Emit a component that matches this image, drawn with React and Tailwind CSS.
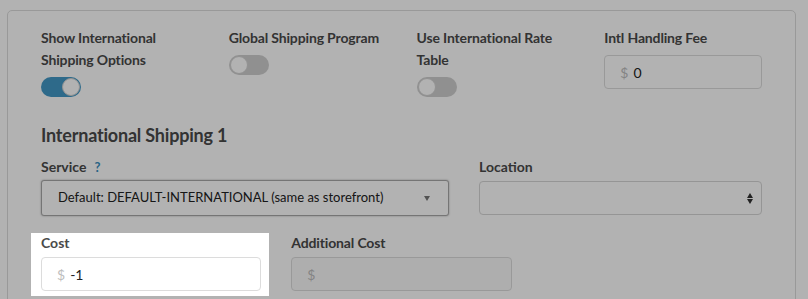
import { useState } from "react";

function Toggle({ on }) {
  return (
    <div
      className={`relative h-[20px] w-[40px] rounded-full ${
        on ? "bg-[#4399c6]" : "bg-[#cfcfcf]"
      }`}
    >
      <div
        className={`absolute top-[1px] h-[18px] w-[18px] rounded-full bg-white border border-[#d0d0d0] ${
          on ? "right-[1px]" : "left-[1px]"
        }`}
      />
    </div>
  );
}

function MoneyInput({ value, disabled }) {
  return (
    <div
      className={`flex h-[34px] items-center rounded-[4px] border border-[#dcdcdc] px-[15px] text-[14px] ${
        disabled ? "bg-[#fafafa]" : "bg-white"
      }`}
    >
      <span className="text-[#bdbdbd]">$</span>
      {value !== undefined && <span className="ml-[5px] text-[#222]">{value}</span>}
    </div>
  );
}

export default function App() {
  const [showIntl] = useState(true);

  return (
    <div
      className="relative h-[299px] w-[808px] overflow-hidden bg-white text-[#4a4a4a]"
      style={{ fontFamily: "Lato, 'Open Sans', sans-serif" }}
    >
      <div className="ml-[7px] mt-[10px] w-[789px] rounded-[5px] border border-[#dcdcdc] bg-white px-[33px] pt-[16px] pb-[40px]">
        {/* Toggles row */}
        <div className="grid grid-cols-4 gap-x-[30px] tracking-[-0.15px]">
          <div>
            <div className="text-[14px] font-bold leading-[22px]">
              Show International
              <br />
              Shipping Options
            </div>
            <div className="mt-[6px]">
              <Toggle on={showIntl} />
            </div>
          </div>
          <div>
            <div className="text-[14px] font-bold leading-[22px]">Global Shipping Program</div>
            <div className="mt-[6px]">
              <Toggle on={false} />
            </div>
          </div>
          <div>
            <div className="text-[14px] font-bold leading-[22px]">
              Use International Rate
              <br />
              Table
            </div>
            <div className="mt-[6px]">
              <Toggle on={false} />
            </div>
          </div>
          <div>
            <div className="text-[14px] font-bold leading-[22px]">Intl Handling Fee</div>
            <div className="mt-[6px] tracking-normal">
              <MoneyInput value="0" />
            </div>
          </div>
        </div>

        {/* International Shipping 1 */}
        <h3 className="mt-[25px] text-[18px] font-bold leading-[26px] tracking-[-0.2px]">
          International Shipping 1
        </h3>

        <div className="mt-[8px] grid grid-cols-[408px_283px] gap-x-[30px]">
          <div>
            <div className="flex items-center text-[14px] font-bold leading-[22px]">
              Service
              <span className="ml-[8px] text-[13px] text-[#3a8fc0]">?</span>
            </div>
            <div className="mt-[2px] flex h-[36px] items-center justify-between rounded-[3px] border border-[#a8a8a8] bg-white pl-[16px] pr-[18px] text-[13px] text-[#222] shadow-[0_0_2px_rgba(0,0,0,0.35)]">
              <span>Default: DEFAULT-INTERNATIONAL (same as storefront)</span>
              <span className="h-0 w-0 border-x-[3.5px] border-t-[5px] border-x-transparent border-t-[#777]" />
            </div>
          </div>
          <div>
            <div className="text-[14px] font-bold leading-[22px]">Location</div>
            <div className="mt-[3px] flex h-[34px] items-center justify-end rounded-[4px] border border-[#d6d6d6] bg-white pr-[8px]">
              <div className="flex flex-col items-center gap-[1px]">
                <span className="h-0 w-0 border-x-[3.5px] border-b-[5px] border-x-transparent border-b-[#333]" />
                <span className="h-0 w-0 border-x-[3.5px] border-t-[5px] border-x-transparent border-t-[#333]" />
              </div>
            </div>
          </div>
        </div>

        {/* Cost row */}
        <div className="mt-[16px] grid grid-cols-3 gap-x-[30px]">
          <div>
            <div className="text-[14px] font-bold leading-[22px]">Cost</div>
            <div className="mt-[3px]">
              <MoneyInput value="-1" />
            </div>
          </div>
          <div>
            <div className="text-[14px] font-bold leading-[22px] tracking-[-0.15px]">Additional Cost</div>
            <div className="mt-[3px]">
              <MoneyInput disabled />
            </div>
          </div>
          <div />
        </div>
      </div>

      {/* Tour spotlight */}
      <div className="pointer-events-none absolute left-[31px] top-[233px] z-10 h-[63px] w-[238px] shadow-[0_0_0_2000px_rgba(0,0,0,0.3)]" />
    </div>
  );
}
